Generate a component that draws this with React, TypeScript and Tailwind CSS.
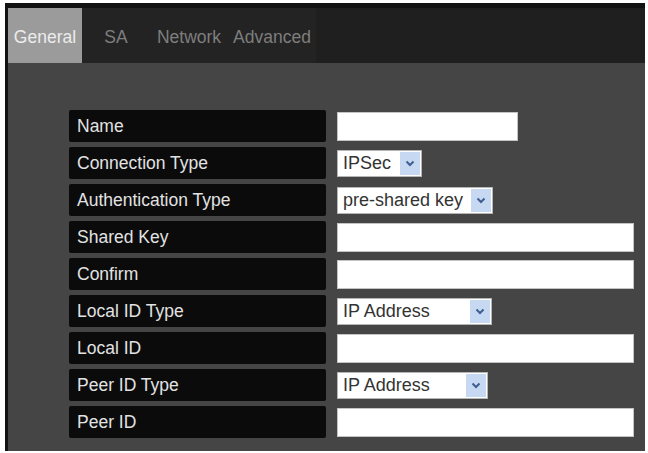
import React from 'react';

type Field = { label: string; kind: 'text' | 'select'; width: string; value?: string };

const fields: Field[] = [
  { label: 'Name', kind: 'text', width: 'w-[181px]' },
  { label: 'Connection Type', kind: 'select', width: 'w-[85px]', value: 'IPSec' },
  { label: 'Authentication Type', kind: 'select', width: 'w-[156px]', value: 'pre-shared key' },
  { label: 'Shared Key', kind: 'text', width: 'w-[297px]' },
  { label: 'Confirm', kind: 'text', width: 'w-[297px]' },
  { label: 'Local ID Type', kind: 'select', width: 'w-[155px]', value: 'IP Address' },
  { label: 'Local ID', kind: 'text', width: 'w-[297px]' },
  { label: 'Peer ID Type', kind: 'select', width: 'w-[151px]', value: 'IP Address' },
  { label: 'Peer ID', kind: 'text', width: 'w-[297px]' },
];

const tabs = [
  { name: 'General', width: 'w-[74px]' },
  { name: 'SA', width: 'w-[68px]' },
  { name: 'Network', width: 'w-[78px]' },
  { name: 'Advanced', width: 'w-[88px]' },
];

const FakeSelect: React.FC<{ value: string; width: string }> = ({ value, width }) => (
  <div className={`${width} h-[27px] bg-white border border-[#b5b5b5] flex items-center justify-between pl-[5px] pr-[1px]`}>
    <span className="text-[18px] text-[#333] leading-none">{value}</span>
    <span className="w-[20px] h-[23px] bg-[#c6d8f2] flex items-center justify-center">
      <svg width="10" height="7" viewBox="0 0 10 7">
        <path d="M1.5 1.5 L5 5 L8.5 1.5" fill="none" stroke="#3f5f8f" strokeWidth="2" />
      </svg>
    </span>
  </div>
);

const App: React.FC = () => {
  return (
    <div className="w-[648px] h-[453px] bg-white pt-[3px] pl-[5px]" style={{ fontFamily: '"Liberation Sans", Arial, sans-serif' }}>
      <div className="w-[640px] h-[448px] bg-[#454545] border-t-[5px] border-l-[3px] border-[#121212] flex flex-col">
        <div className="h-[55px] bg-[#1f1f1f] flex">
          {tabs.map((tab, i) => (
            <div
              key={tab.name}
              className={`${tab.width} h-full flex items-center justify-center pt-[3px] text-[17.5px] ${
                i === 0 ? 'bg-[#9b9b9b] text-[#ececec]' : 'bg-[#232323] text-[#7e7e7e]'
              }`}
            >
              {tab.name}
            </div>
          ))}
        </div>
        <div className="pt-[47px] pl-[61px] grid grid-cols-[257px_1fr] auto-rows-[32px] gap-x-[11px] gap-y-[5px]">
          {fields.map(f => (
            <React.Fragment key={f.label}>
              <div className="bg-[#0b0b0b] rounded-[2px] flex items-center pl-[8px] text-[17.5px] text-[#e2e2e2]">
                {f.label}
              </div>
              <div className="flex items-center">
                {f.kind === 'text' ? (
                  <div className={`${f.width} h-[29px] bg-white border border-[#c4c4c4]`} />
                ) : (
                  <FakeSelect value={f.value || ''} width={f.width} />
                )}
              </div>
            </React.Fragment>
          ))}
        </div>
      </div>
    </div>
  );
};

export default App;
